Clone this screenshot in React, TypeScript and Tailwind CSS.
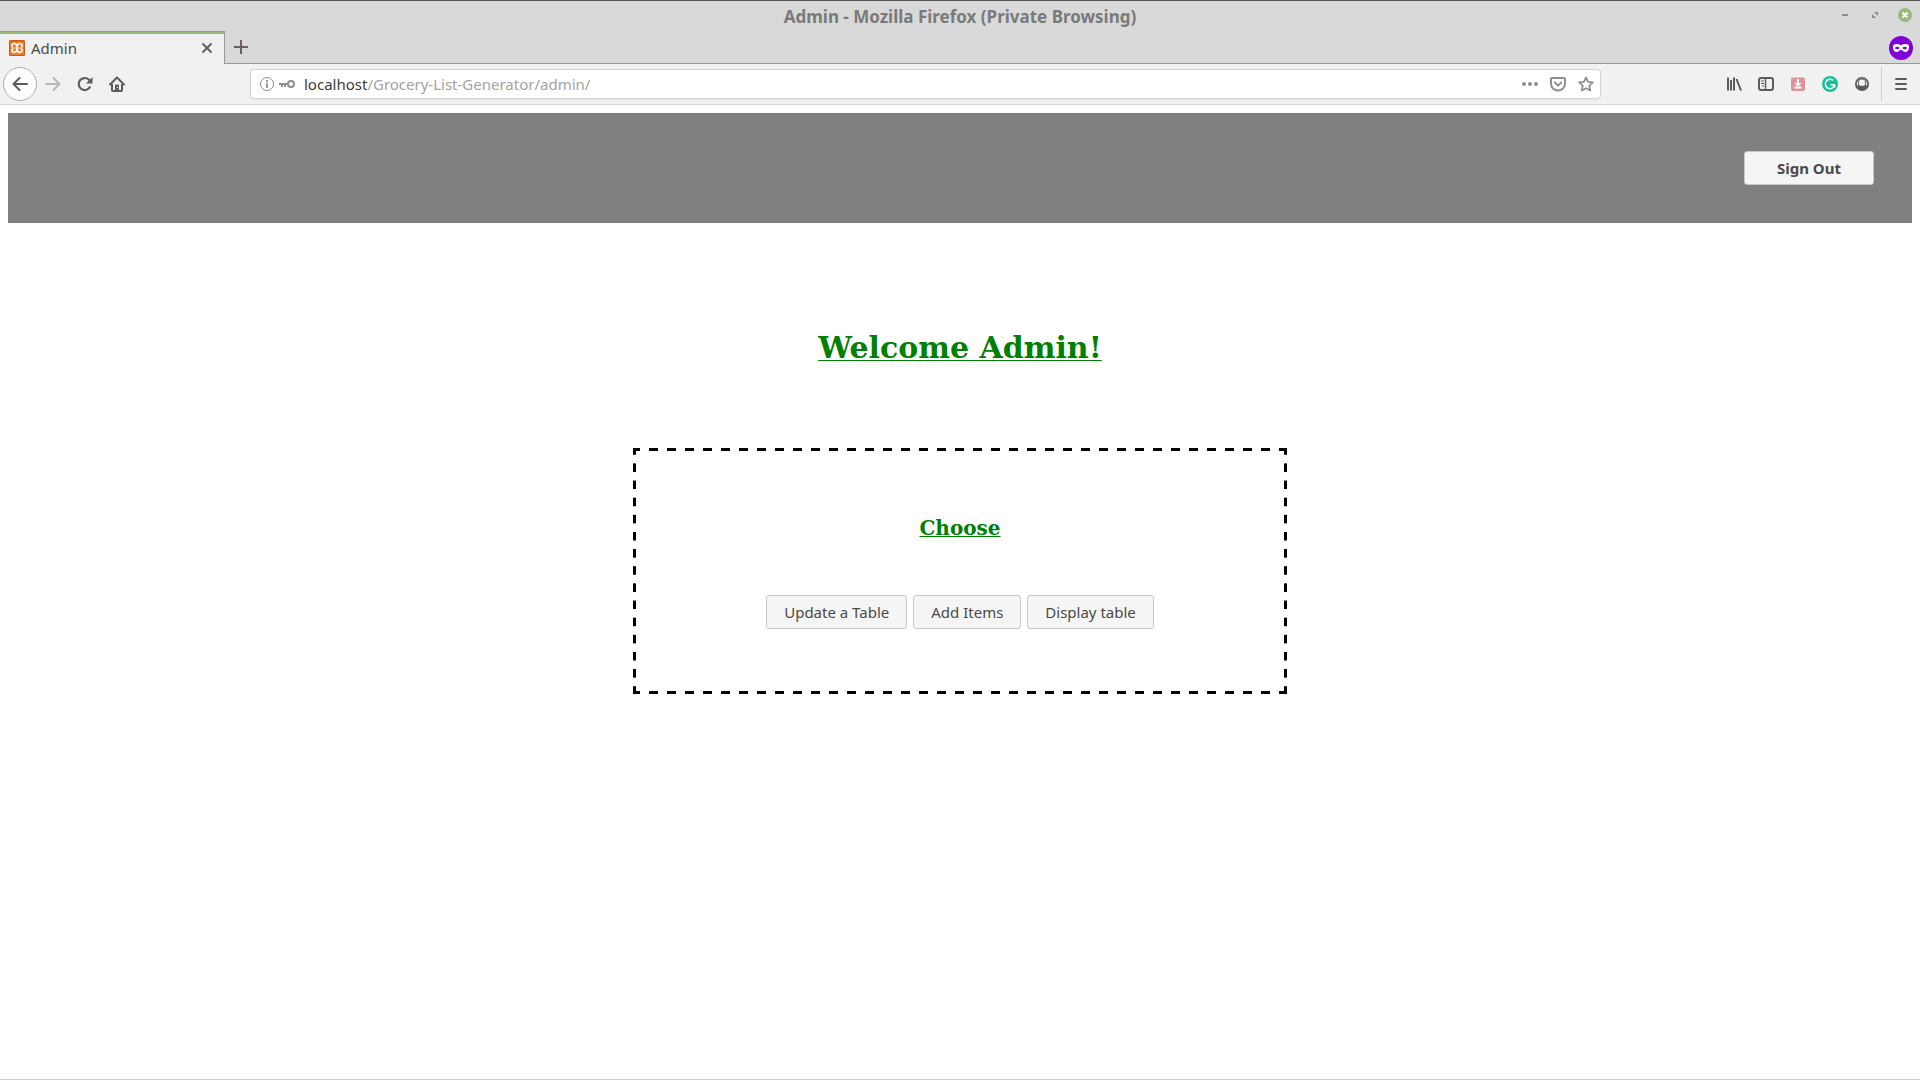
import type { ReactNode } from "react";

function Svg({ size = 16, children }: { size?: number; children: ReactNode }) {
  return (
    <svg width={size} height={size} viewBox={`0 0 ${size} ${size}`} fill="none" aria-hidden="true" className="block shrink-0">
      {children}
    </svg>
  );
}

function IconButton({ label, className = "", children }: { label: string; className?: string; children: ReactNode }) {
  return (
    <button type="button" aria-label={label} className={`flex size-8 shrink-0 items-center justify-center text-[#5c5c5c] ${className}`}>
      {children}
    </button>
  );
}

function TitleBar() {
  return (
    <header className="grid h-[31px] grid-cols-[1fr_auto_1fr] items-start border-t border-[#555] bg-[#d9d9d9]">
      <span />
      <h1 className="mt-1 text-[17px] leading-6 font-bold text-[#7a7a7a]">Admin - Mozilla Firefox (Private Browsing)</h1>
      <div className="mt-[6px] mr-[7px] flex justify-end gap-[14px]">
        <button type="button" aria-label="Minimize">
          <Svg>
            <path d="M5 8h6" stroke="#8a8a8a" strokeWidth="2" />
          </Svg>
        </button>
        <button type="button" aria-label="Restore">
          <Svg>
            <path d="M5 7v4h4zM7 5h4v4z" fill="#8a8a8a" />
          </Svg>
        </button>
        <button type="button" aria-label="Close window">
          <Svg>
            <circle cx="8" cy="8" r="7" fill="#9ab87c" />
            <path d="M5.500 5.500l5 5M10.500 5.500l-5 5" stroke="#fff" strokeWidth="2" />
          </Svg>
        </button>
      </div>
    </header>
  );
}

function TabStrip() {
  return (
    <div className="flex h-[33px] items-stretch bg-[#d9d9d9]">
      <div className="flex w-[225px] items-center border-t border-r border-[#999] bg-[#f1f1f1]">
        <div className="flex h-full w-full items-center border-t-2 border-[#9ab87c] px-[9px] pb-[2px]">
          <Svg>
            <rect width="16" height="16" rx="1.500" fill="#c9591a" />
            <rect x="1" y="1.500" width="14" height="13.500" rx="1" fill="#f37a24" />
            <path
              d="M8 6.200C7.400 4.400 6.400 3.500 5.200 3.500 3.700 3.500 2.900 4.500 2.900 5.700c0 .9.500 1.500 1.100 2.300-.6.800-1.100 1.400-1.100 2.300 0 1.200.8 2.200 2.300 2.200 1.200 0 2.200-.9 2.800-2.700.6 1.800 1.600 2.700 2.800 2.700 1.500 0 2.300-1 2.300-2.200 0-.9-.5-1.500-1.100-2.300.6-.8 1.100-1.400 1.100-2.300 0-1.200-.8-2.200-2.300-2.200-1.200 0-2.200.9-2.800 2.700z"
              stroke="#fff"
              strokeWidth="1.600"
              strokeLinejoin="round"
            />
            <path d="M6.500 8h3" stroke="#fff" strokeWidth="2.400" />
          </Svg>
          <span className="ml-[6px] flex-1 text-[15px] leading-5 text-[#4a4a4a]">Admin</span>
          <button type="button" aria-label="Close tab">
            <Svg>
              <path d="M3.500 3.500l9 9M12.500 3.500l-9 9" stroke="#5c5c5c" strokeWidth="1.800" />
            </Svg>
          </button>
        </div>
      </div>
      <div className="flex flex-1 items-center justify-between border-b border-[#999] pr-[7px]">
        <IconButton label="New tab">
          <Svg>
            <path d="M8 1v14M1 8h14" stroke="#6b6060" strokeWidth="2" />
          </Svg>
        </IconButton>
        <span className="mt-px">
          <Svg size={24}>
            <circle cx="12" cy="12" r="12" fill="#8000d7" />
            <path
              d="M4 9.200C6.500 7.500 9.500 8 12 9.200 14.500 8 17.500 7.500 20 9.200c.4 4-1 6.800-3.800 6.800-1.700 0-2.500-2-4.200-2s-2.500 2-4.200 2C5 16 3.600 13.200 4 9.200z"
              fill="#fff"
            />
            <ellipse cx="8.200" cy="12" rx="2.100" ry="1.300" fill="#8000d7" />
            <ellipse cx="15.800" cy="12" rx="2.100" ry="1.300" fill="#8000d7" />
          </Svg>
        </span>
      </div>
    </div>
  );
}

function AddressBar() {
  return (
    <div className="flex h-[30px] flex-1 items-center rounded-[4px] border border-[#d4d4d4] bg-white pr-[6px] pl-2 text-[#8f8f8f] shadow-xs">
      <Svg>
        <circle cx="8" cy="8" r="6.500" stroke="currentColor" />
        <path d="M8 7v5M8 4v2" stroke="currentColor" strokeWidth="1.800" />
      </Svg>
      <span className="ml-1">
        <Svg>
          <circle cx="12" cy="8" r="3" stroke="currentColor" strokeWidth="2" />
          <path d="M0 7h9v2H7v2H5V9H4v2H2V9H0z" fill="currentColor" />
        </Svg>
      </span>
      <p className="ml-[9px] flex-1 text-[15px] leading-5 text-[#a3a3a3]">
        <span className="text-[#3c3c3c]">localhost</span>/Grocery-List-Generator/admin/
      </p>
      <div className="flex gap-3">
        <button type="button" aria-label="Page actions">
          <Svg>
            <circle cx="2" cy="8" r="2" fill="currentColor" />
            <circle cx="8" cy="8" r="2" fill="currentColor" />
            <circle cx="14" cy="8" r="2" fill="currentColor" />
          </Svg>
        </button>
        <button type="button" aria-label="Save to Pocket">
          <Svg>
            <path d="M2 2h12a1 1 0 0 1 1 1v4.500a7 7 0 0 1-14 0V3a1 1 0 0 1 1-1z" stroke="currentColor" strokeWidth="2" />
            <path d="M4.800 6.500L8 9.600l3.200-3.100" stroke="currentColor" strokeWidth="2" strokeLinecap="round" strokeLinejoin="round" />
          </Svg>
        </button>
        <button type="button" aria-label="Bookmark this page">
          <Svg>
            <path
              d="M8 1.500l2 4.300 4.800.6-3.500 3.300.9 4.800L8 12.200l-4.200 2.300.9-4.800L1.200 6.400 6 5.800z"
              stroke="currentColor"
              strokeWidth="1.800"
              strokeLinejoin="round"
            />
          </Svg>
        </button>
      </div>
    </div>
  );
}

function Toolbar() {
  return (
    <nav aria-label="Browser toolbar" className="flex h-[41px] items-center border-b border-[#d4d4d4] bg-[#f1f1f1]">
      <div className="flex w-[250px] items-center pl-[3px]">
        <button
          type="button"
          aria-label="Back"
          className="flex size-[34px] shrink-0 items-center justify-center rounded-full border border-[#b0b0b0] bg-[#fcfcfc] text-[#5c5c5c]"
        >
          <Svg>
            <path d="M15 8H1.500M7.500 2L1.500 8l6 6" stroke="currentColor" strokeWidth="2" strokeLinecap="round" strokeLinejoin="round" />
          </Svg>
        </button>
        <IconButton label="Forward" className="text-[#b9b9b9]">
          <Svg>
            <path d="M1 8h13.500M8.500 2l6 6-6 6" stroke="currentColor" strokeWidth="2" strokeLinecap="round" strokeLinejoin="round" />
          </Svg>
        </IconButton>
        <IconButton label="Reload">
          <Svg>
            <path d="M13.200 10.500A6 6 0 1 1 12 3.800L13.500 5.500" stroke="currentColor" strokeWidth="2.200" />
            <path d="M15.500 1v6.500H9z" fill="currentColor" />
          </Svg>
        </IconButton>
        <IconButton label="Home">
          <Svg>
            <path d="M1 8.500L8 1.500l7 7" stroke="currentColor" strokeWidth="2" strokeLinecap="round" strokeLinejoin="round" />
            <path d="M3 8v6.200a.8.8 0 0 0 .8.800h8.400a.8.8 0 0 0 .8-.8V8" stroke="currentColor" strokeWidth="2" />
            <path d="M6 14V9.500a1 1 0 0 1 1-1h2a1 1 0 0 1 1 1V14z" fill="currentColor" />
            <circle cx="8.500" cy="11.500" r=".7" fill="#f1f1f1" />
          </Svg>
        </IconButton>
      </div>
      <AddressBar />
      <div className="flex w-[319px] items-center justify-end pr-[3px]">
        <IconButton label="Library">
          <Svg>
            <path d="M2 1.500v13M5 4v10.500M8 1.500v13M10.500 3l4.500 11.500" stroke="currentColor" strokeWidth="2" />
          </Svg>
        </IconButton>
        <IconButton label="Sidebars">
          <Svg>
            <rect x="1" y="2" width="14" height="12" rx="2" stroke="currentColor" strokeWidth="2" />
            <path d="M7.500 2v12" stroke="currentColor" strokeWidth="1.500" />
            <path d="M3 5h3M3 7.500h3M4 10h2" stroke="currentColor" />
          </Svg>
        </IconButton>
        <IconButton label="Downloader">
          <Svg>
            <rect x="1" y="1.500" width="14" height="13.500" rx="2" fill="#dd9499" />
            <path d="M8 3v6M4.500 11.500h7" stroke="#fff" strokeWidth="1.800" />
            <path d="M4.500 7h7L8 10.500z" fill="#fff" />
          </Svg>
        </IconButton>
        <IconButton label="Grammarly">
          <Svg>
            <circle cx="8" cy="8" r="8" fill="#15c39a" />
            <path d="M11 4.300A4.700 4.700 0 1 0 12.600 9M8.500 8.800h4.100v2.700" stroke="#fff" strokeWidth="1.500" />
          </Svg>
        </IconButton>
        <IconButton label="Account">
          <Svg>
            <circle cx="8" cy="8" r="7" fill="currentColor" />
            <path d="M3 9.200a5.200 5.200 0 1 1 10 0H3z" fill="#f1f1f1" />
            <circle cx="8" cy="6.800" r="4.200" fill="currentColor" />
            <circle cx="8" cy="6.700" r="3.200" fill="#f1f1f1" />
          </Svg>
        </IconButton>
        <span className="ml-[3px] h-[34px] w-px bg-[#d0d0d0]" />
        <IconButton label="Open menu" className="ml-[3px]">
          <Svg>
            <path d="M3 3h10M3 8h10M3 13h10" stroke="currentColor" strokeWidth="2" strokeLinecap="round" />
          </Svg>
        </IconButton>
      </div>
    </nav>
  );
}

/* Three-pixel frame whose dashes and gaps are equally long; tiles are rounded so whole dashes fill each side. */
function DashedFrame({ children }: { children: ReactNode }) {
  return (
    <section className="relative mx-auto w-full max-w-[654px] bg-no-repeat [background-image:linear-gradient(#000,#000),linear-gradient(#000,#000),linear-gradient(#000,#000),linear-gradient(#000,#000)] [background-position:0_0,100%_0,0_100%,100%_100%] [background-size:3px_3px]">
      <span
        aria-hidden="true"
        className="pointer-events-none absolute inset-x-[3px] inset-y-0 [background-image:linear-gradient(90deg,#000_25%,transparent_25%,transparent_75%,#000_75%),linear-gradient(90deg,#000_25%,transparent_25%,transparent_75%,#000_75%)] [background-position:0_0,0_100%] [background-repeat:round_no-repeat] [background-size:18px_3px]"
      />
      <span
        aria-hidden="true"
        className="pointer-events-none absolute inset-x-0 inset-y-[3px] [background-image:linear-gradient(#000_25%,transparent_25%,transparent_75%,#000_75%),linear-gradient(#000_25%,transparent_25%,transparent_75%,#000_75%)] [background-position:0_0,100%_0] [background-repeat:no-repeat_round] [background-size:3px_17px]"
      />
      {children}
    </section>
  );
}

const actions = ["Update a Table", "Add Items", "Display table"];

export default function App() {
  return (
    <div className="flex min-h-screen flex-col border-b border-[#ccc] bg-white font-['Noto_Sans',sans-serif]">
      <TitleBar />
      <TabStrip />
      <Toolbar />
      <main className="flex-1 p-2">
        <div className="flex h-[110px] items-center justify-end bg-[#808080] pr-[38px]">
          <button
            type="button"
            className="h-[34px] rounded-[3px] border border-[#c8c8c8] bg-[#f5f5f5] px-8 text-[15px] leading-5 font-bold text-[#4a4a4a]"
          >
            Sign Out
          </button>
        </div>
        <h2 className="mt-[105px] text-center font-['DejaVu_Serif',serif] text-[30px] leading-10 font-bold text-[#008000] underline decoration-1 underline-offset-2">
          Welcome Admin!
        </h2>
        <div className="mt-20">
          <DashedFrame>
            <div className="flex flex-col items-center pt-[66px] pb-[65px]">
              <h3 className="font-['DejaVu_Serif',serif] text-xl leading-7 font-bold text-[#008000] underline decoration-1">Choose</h3>
              <div className="mt-[53px] flex gap-[6px]">
                {actions.map((label) => (
                  <button
                    key={label}
                    type="button"
                    className="h-[34px] rounded-[3px] border border-[#c8c8c8] bg-[#f5f5f5] px-[17px] text-[15px] leading-5 text-[#4a4a4a]"
                  >
                    {label}
                  </button>
                ))}
              </div>
            </div>
          </DashedFrame>
        </div>
      </main>
    </div>
  );
}
